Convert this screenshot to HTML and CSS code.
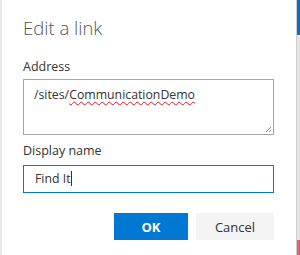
FILE: index.html
```html
<!DOCTYPE html>
<html lang="en">
<head>
    <meta charset="UTF-8">
    <title>Edit a link</title>
    <link rel="stylesheet" href="styles.css">
</head>
<body>
    <div class="page">
        <!-- Dialogo -->
        <div class="dialog">
            <h1 class="title">Edit a link</h1>

            <label class="field-label">Address</label>
            <div class="textarea">
                <span>/sites/<span class="misspelled">CommunicationDemo</span></span>
                <svg class="grip" width="7" height="7" viewBox="0 0 7 7">
                    <path d="M6 1 L1 6 M6 4 L4 6" stroke="#8a8a8a" stroke-width="1" fill="none"/>
                </svg>
            </div>

            <label class="field-label">Display name</label>
            <div class="input">Find It<span class="caret"></span></div>

            <div class="actions">
                <button class="btn btn-primary">OK</button>
                <button class="btn btn-default">Cancel</button>
            </div>
        </div>

        <!-- Pagina de fondo visible a la derecha -->
        <div class="behind"></div>
    </div>
</body>
</html>
```

FILE: styles.css
```css
* {
    box-sizing: border-box;
}

body {
    margin: 0;
    padding: 0;
    font-family: "Open Sans", "Noto Sans", sans-serif;
    color: #333333;
    background: #ffffff;
}

.page {
    display: flex;
    height: 255px;
    width: 300px;
    overflow: hidden;
}

.dialog {
    width: 297px;
    padding: 0 22px 0 21px;
    border-left: 2px solid #eaeaea;
    border-right: 1px solid #d0d0d0;
    background: #ffffff;
}

.title {
    margin: 16px 0 0;
    font-size: 18.5px;
    font-weight: 300;
    line-height: 24px;
    color: #555555;
}

.field-label {
    display: block;
    font-size: 12.5px;
    line-height: 16px;
    color: #333333;
}

.title + .field-label {
    margin-top: 19px;
}

.textarea {
    position: relative;
    height: 56px;
    margin-top: 4px;
    border: 1px solid #a6a6a6;
    padding: 5px 10px;
    font-size: 12.3px;
    line-height: 19px;
    color: #333333;
}

.misspelled {
    text-decoration: underline wavy #e81123;
    text-decoration-thickness: 1px;
    text-underline-offset: 2px;
}

.grip {
    position: absolute;
    right: 1px;
    bottom: 1px;
}

.textarea + .field-label {
    margin-top: 8px;
}

.input {
    height: 28px;
    margin-top: 6px;
    border: 1px solid #0078d4;
    padding: 0 11px;
    font-size: 12.3px;
    line-height: 26px;
    color: #333333;
}

.caret {
    display: inline-block;
    width: 1px;
    height: 15px;
    background: #333333;
    vertical-align: -3px;
}

.actions {
    display: flex;
    justify-content: flex-end;
    gap: 8px;
    margin-top: 20px;
}

.btn {
    height: 27px;
    border: none;
    padding: 0;
    font-family: "Open Sans", "Noto Sans", sans-serif;
    font-size: 13px;
}

.btn-primary {
    width: 74px;
    background: #0078d4;
    color: #ffffff;
    font-weight: 700;
}

.btn-default {
    width: 78px;
    background: #f4f4f4;
    color: #333333;
}

.behind {
    flex: 1;
    background: linear-gradient(to bottom,
        #106ebe 0, #106ebe 35px,
        #e6e6e6 35px, #e6e6e6 240px,
        #e06070 240px, #e06070 255px);
}
```
